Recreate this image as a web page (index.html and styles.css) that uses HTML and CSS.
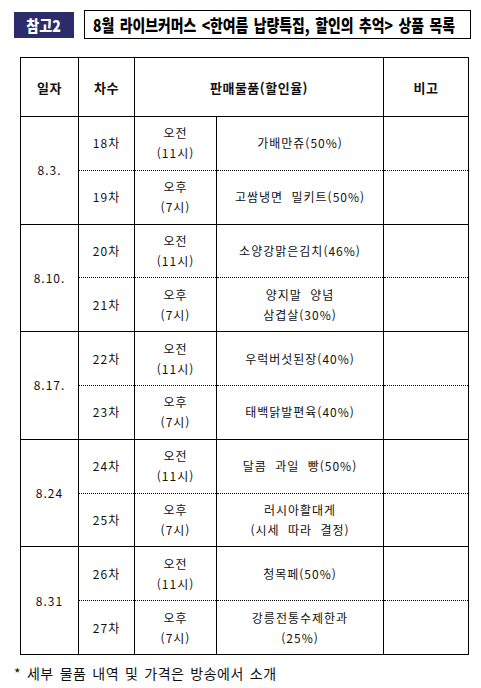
FILE: index.html
```html
<!DOCTYPE html>
<html lang="ko">
<head>
<meta charset="utf-8">
<title>8월 라이브커머스 상품 목록</title>
<link rel="stylesheet" href="styles.css">
</head>
<body>
<div class="page">
  <div class="head">
    <div class="tag"><span>참고2</span></div>
    <div class="title"><span>8월 라이브커머스 &lt;한여름 납량특집, 할인의 추억&gt; 상품 목록</span></div>
  </div>
  <table class="list">
    <colgroup>
      <col class="c-date"><col class="c-no"><col class="c-time"><col class="c-item"><col class="c-note">
    </colgroup>
    <thead>
      <tr><th>일자</th><th>차수</th><th colspan="2">판매물품(할인율)</th><th>비고</th></tr>
    </thead>
    <tbody>
      <tr class="am"><td rowspan="2" class="date">8.3.</td><td>18차</td><td>오전<br>(11시)</td><td>가배만쥬(50%)</td><td></td></tr>
      <tr class="pm"><td>19차</td><td>오후<br>(7시)</td><td>고쌈냉면 밀키트(50%)</td><td></td></tr>
      <tr class="am"><td rowspan="2" class="date">8.10.</td><td>20차</td><td>오전<br>(11시)</td><td>소양강맑은김치(46%)</td><td></td></tr>
      <tr class="pm"><td>21차</td><td>오후<br>(7시)</td><td>양지말 양념<br>삼겹살(30%)</td><td></td></tr>
      <tr class="am"><td rowspan="2" class="date">8.17.</td><td>22차</td><td>오전<br>(11시)</td><td>우럭버섯된장(40%)</td><td></td></tr>
      <tr class="pm"><td>23차</td><td>오후<br>(7시)</td><td>태백닭발편육(40%)</td><td></td></tr>
      <tr class="am"><td rowspan="2" class="date">8.24</td><td>24차</td><td>오전<br>(11시)</td><td>달콤 과일 빵(50%)</td><td></td></tr>
      <tr class="pm"><td>25차</td><td>오후<br>(7시)</td><td>러시아활대게<br>(시세 따라 결정)</td><td></td></tr>
      <tr class="am"><td rowspan="2" class="date">8.31</td><td>26차</td><td>오전<br>(11시)</td><td>청목페(50%)</td><td></td></tr>
      <tr class="pm"><td>27차</td><td>오후<br>(7시)</td><td>강릉전통수제한과<br>(25%)</td><td></td></tr>
    </tbody>
  </table>
  <p class="note">* 세부 물품 내역 및 가격은 방송에서 소개</p>
</div>
</body>
</html>
```
FILE: styles.css
```css
body {
  margin: 0;
  background: #fff;
  color: #111;
  font-family: "Noto Sans CJK KR", "Noto Sans", sans-serif;
}

.page {
  padding: 10px 0 0 14px;
  width: 467px;
}

.head {
  display: flex;
  align-items: center;
  gap: 10px;
  height: 29px;
}

.tag {
  width: 60px;
  height: 26px;
  background: #2b2c69;
  color: #fff;
  display: flex;
  align-items: center;
  justify-content: center;
  font-size: 16px;
  font-weight: 900;
}

.tag span {
  display: inline-block;
  transform: scaleX(0.88);
}

.title {
  box-sizing: border-box;
  width: 387px;
  height: 29px;
  border: 1px solid #000;
  display: flex;
  align-items: center;
  padding-left: 8px;
  overflow: hidden;
  white-space: nowrap;
}

.title span {
  display: inline-block;
  flex: none;
  font-size: 17px;
  font-weight: 900;
  word-spacing: 2px;
  color: #000;
  transform: scaleX(0.815);
  transform-origin: left center;
}

.list {
  margin: 18px 0 0 6px;
  width: 448px;
  border-collapse: collapse;
  table-layout: fixed;
}

.c-date { width: 58px; }
.c-no { width: 56px; }
.c-time { width: 82px; }
.c-item { width: 167px; }
.c-note { width: 85px; }

.list th,
.list td {
  border: 1px solid #000;
  padding: 0;
  text-align: center;
  vertical-align: middle;
}

.list thead tr {
  height: 59px;
}

.list th {
  font-size: 13px;
  font-weight: 700;
  letter-spacing: 0.5px;
}

.list tbody tr {
  height: 53.8px;
}

.list td {
  font-size: 12px;
  line-height: 20px;
  letter-spacing: 1px;
  word-spacing: 4px;
  font-weight: 400;
}

.list .am td:not(.date) {
  border-bottom: 1px dotted #000;
}

.list .pm td {
  border-top: 1px dotted #000;
}

.note {
  margin: 8px 0 0;
  font-size: 14px;
  line-height: 20px;
  letter-spacing: 0.5px;
  word-spacing: 1.5px;
}
```
